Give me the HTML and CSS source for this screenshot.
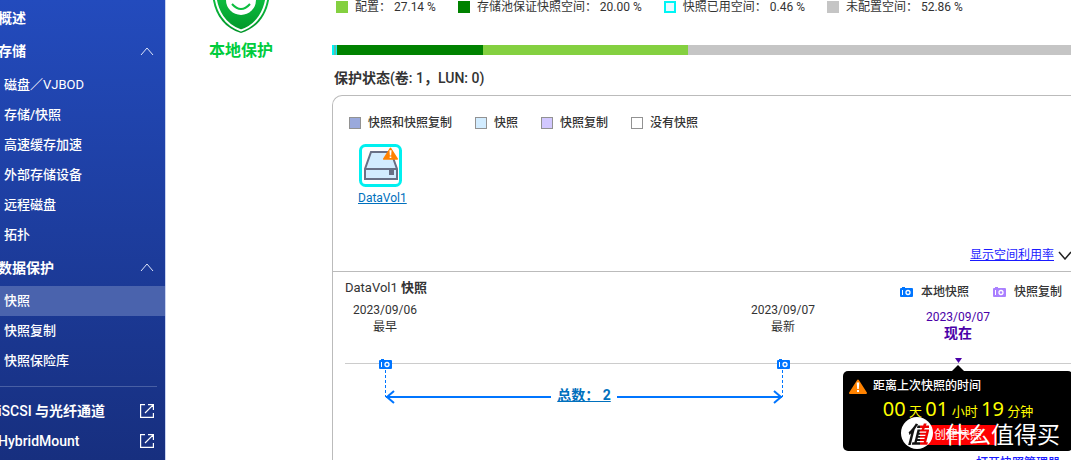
FILE: index.html
```html
<!DOCTYPE html>
<html lang="zh-CN">
<head>
<meta charset="utf-8">
<meta name="viewport" content="width=device-width, initial-scale=1">
<title>存储与快照总管</title>
<link rel="stylesheet" href="styles.css">
</head>
<body>
<svg class="defs" aria-hidden="true">
  <symbol id="camera" viewBox="0 0 13 10">
    <path fill="currentColor" d="M1 1h1V0h3v1h7q1 0 1 1v7q0 1-1 1H1q-1 0-1-1V2q0-1 1-1z"/>
    <path fill="#fff" d="M2 3h1v5H2z"/>
    <circle cx="8" cy="5.5" r="2" fill="none" stroke="#fff" stroke-width="1.3"/>
  </symbol>
  <symbol id="external" viewBox="0 0 14 14">
    <path fill="none" stroke="#fff" stroke-width="1.2" d="M5 .6H.6v12.800h12.800V9M8 .6h5.400V6M13.400 .6L5 9"/>
  </symbol>
  <symbol id="up" viewBox="0 0 14 9">
    <path fill="none" stroke="#dfe6fa" d="M1 8l6-7 6 7"/>
  </symbol>
  <symbol id="warning" viewBox="0 0 18 15">
    <path fill="#ff8200" stroke="#ff8200" stroke-width="2" stroke-linejoin="round" d="M9 1.500L17 14H1z"/>
    <path fill="#fff" d="M7.700 3.500h2.600L9.800 10H8.200zM8 11h2v2H8z"/>
  </symbol>
</svg>

<nav class="sidebar">
  <a class="group" href="#"><strong>概述</strong></a>
  <button class="group toggle" type="button"><strong>存储</strong><svg class="up"><use href="#up"/></svg></button>
  <a class="item" href="#">磁盘／<span class="latin">VJBOD</span></a>
  <a class="item" href="#">存储/快照</a>
  <a class="item" href="#">高速缓存加速</a>
  <a class="item" href="#">外部存储设备</a>
  <a class="item" href="#">远程磁盘</a>
  <a class="item" href="#">拓扑</a>
  <button class="group toggle" type="button"><strong>数据保护</strong><svg class="up"><use href="#up"/></svg></button>
  <a class="item active" href="#">快照</a>
  <a class="item" href="#">快照复制</a>
  <a class="item" href="#">快照保险库</a>
  <hr class="rule">
  <a class="group" href="#"><span>iSCSI <strong>与光纤通道</strong></span><svg class="external"><use href="#external"/></svg></a>
  <a class="group" href="#">HybridMount<svg class="external"><use href="#external"/></svg></a>
</nav>

<main class="main">
  <section class="protection">
    <svg class="shield" viewBox="0 0 58 33">
      <defs><linearGradient id="green" x1="0" y1="0" x2="0" y2="1"><stop offset="0" stop-color="#10c544"/><stop offset="1" stop-color="#009428"/></linearGradient></defs>
      <path fill="url(#green)" d="M0-8h58C57 12 47 28 29 33 11 28 1 12 0-8z"/>
      <path fill="none" stroke="#fff" stroke-width="2" d="M3-8C4 11 13 25 29 30.500 45 25 54 11 55-8"/>
      <circle cx="29" cy="0" r="15" fill="#fff"/>
      <path fill="none" stroke="#0cbd3f" stroke-width="2" d="M20 4q9 10 18 0"/>
    </svg>
    <strong class="protection-name">本地保护</strong>
  </section>

  <section class="content">
    <ul class="legend usage">
      <li><i class="swatch lime"></i>配置： 27.14 %</li>
      <li><i class="swatch dark"></i>存储池保证快照空间： 20.00 %</li>
      <li><i class="swatch cyan"></i>快照已用空间： 0.46 %</li>
      <li><i class="swatch gray"></i>未配置空间： 52.86 %</li>
    </ul>
    <div class="bar"><i class="seg used"></i><i class="seg dark"></i><i class="seg lime"></i><i class="seg gray"></i></div>
    <h2 class="heading"><strong>保护状态</strong>(<strong>卷</strong>: 1<strong>，</strong>LUN: 0)</h2>

    <div class="panel">
      <div class="volumes">
        <ul class="legend states">
          <li><i class="swatch box both"></i>快照和快照复制</li>
          <li><i class="swatch box snap"></i>快照</li>
          <li><i class="swatch box replica"></i>快照复制</li>
          <li><i class="swatch box"></i>没有快照</li>
        </ul>
        <a class="volume" href="#">
          <svg class="disk" viewBox="0 0 43 43">
            <rect x="1.500" y="1.500" width="40" height="40" rx="5" fill="#fff" stroke="#00f0f0" stroke-width="3"/>
            <path fill="#d2ecff" stroke="#687086" stroke-width="2" d="M12 8h20l6 17v10H6V25z"/>
            <path stroke="#687086" stroke-width="2" d="M6 25h32"/>
            <path fill="#687086" d="M30 26h5v5h-5z"/>
            <use href="#warning" x="24" y="3" width="15" height="13"/>
          </svg>
          <span>DataVol1</span>
        </a>
        <div class="utilization"><a class="link" href="#">显示空间利用率</a><svg class="down" viewBox="0 0 14 9"><path fill="none" stroke="#222" stroke-width="1.500" d="M1 1l6 7 6-7"/></svg></div>
      </div>

      <div class="history">
        <div class="history-head">
          <h3 class="history-title">DataVol1 <strong>快照</strong></h3>
          <ul class="legend sources">
            <li><svg class="camera"><use href="#camera"/></svg>本地快照</li>
            <li><svg class="camera remote"><use href="#camera"/></svg>快照复制</li>
          </ul>
        </div>
        <div class="timeline">
          <div class="date first">2023/09/06<br>最早</div>
          <div class="date latest">2023/09/07<br>最新</div>
          <div class="date now">2023/09/07<br><strong class="now-label">现在</strong></div>
          <i class="track"></i>
          <svg class="camera pin first"><use href="#camera"/></svg>
          <svg class="camera pin latest"><use href="#camera"/></svg>
          <div class="present">
            <svg class="mark" viewBox="0 0 7 5"><path fill="#4a00a8" d="M0 0h7L3.500 5z"/></svg>
            <div class="tooltip">
              <div class="tip-title"><svg class="warning"><use href="#warning"/></svg>距离上次快照的时间</div>
              <div class="elapsed"><span class="num">00</span> 天 <span class="num">01</span> 小时 <span class="num">19</span> 分钟</div>
              <button class="create" type="button">创建快照</button>
            </div>
          </div>
          <div class="range">
            <svg class="head" viewBox="0 0 10 14"><path fill="none" stroke="#0075ff" stroke-width="2" d="M9 1L2 7l7 6M1 7h9"/></svg>
            <i class="shaft"></i><a class="total" href="#">总数： 2</a><i class="shaft"></i>
            <svg class="head" viewBox="0 0 10 14"><path fill="none" stroke="#0075ff" stroke-width="2" d="M1 1l7 6-7 6M0 7h9"/></svg>
          </div>
        </div>
        <div class="manager"><a class="link" href="#">打开快照管理器</a></div>
      </div>
    </div>
  </section>
</main>

<div class="watermark"><span class="stamp"><span class="stamp-text">值</span></span><span>什么值得买</span></div>
</body>
</html>
```

FILE: styles.css
```css
* { box-sizing: border-box; }
body {
  display: flex;
  height: 100vh;
  margin: 0;
  overflow: hidden;
  position: relative;
  background: #fff;
  color: #333;
  font: 12px/16px Roboto, "Noto Sans CJK SC", sans-serif;
}
h2, h3, ul { margin: 0; padding: 0; list-style: none; }
svg { flex: none; display: block; }
.defs { position: absolute; width: 0; height: 0; }

.sidebar {
  display: flex;
  flex-direction: column;
  flex: none;
  width: 182px;
  margin-left: -16px;
  padding-top: 3px;
  border-right: 1px solid #c9d3f0;
  background: linear-gradient(#234bbd, #172f7f);
}
.group, .item {
  display: flex;
  flex: none;
  align-items: center;
  color: #fff;
  text-decoration: none;
}
.group {
  justify-content: space-between;
  height: 30px;
  padding: 0 11px 0 14px;
  border: 0;
  background: none;
  font: 500 14px/20px Roboto, "Noto Sans CJK SC", sans-serif;
}
.toggle { height: 36px; }
.toggle + .item { margin-top: 1px; }
.toggle:nth-of-type(2) { height: 35px; }
.item { height: 30px; padding-left: 20px; font-size: 13px; font-weight: 500; }
.latin { font-weight: 400; }
.active { background: #4a63ad; }
.up { width: 14px; height: 9px; }
.external { width: 14px; height: 14px; }
.rule { width: 157px; height: 1px; margin: 10px 8px 9px 16px; border: 0; background: #485fa4; flex: none; }

.main { display: flex; flex: 1; min-width: 0; gap: 16px; }
.protection { display: flex; flex-direction: column; align-items: center; width: 150px; flex: none; }
.shield { width: 58px; height: 33px; }
.protection-name { margin-top: 8px; color: #00cc3d; font-size: 16px; line-height: 20px; }
.content { display: flex; flex-direction: column; flex: 1; min-width: 0; }

.legend { display: flex; gap: 22px; white-space: nowrap; }
.legend li { display: flex; align-items: center; gap: 7px; }
.usage { height: 14px; padding-left: 4px; }
.states { gap: 23px; font-weight: 500; }
.swatch { width: 12px; height: 12px; }
.box { border: 1px solid #929292; }
.both { background: #9aa9dc; }
.snap { background: #d2ecff; }
.replica { background: #d2c8ff; }
.cyan { border: 2px solid #00f5f5; background: #eafaff; }
.dark { background: #008200; }
.lime { background: #84d040; }
.gray { background: #c5c5c5; }
.bar { display: flex; flex: none; height: 10px; margin-top: 31px; }
.used { flex: 2; border: solid #00f5f5; border-width: 0 1px 0 2px; background: #60b8b0; }
.seg.dark { flex: 146; }
.seg.lime { flex: 205; }
.seg.gray { flex: 383; }
.heading { margin: 13px 0 7px 2px; font-size: 14px; line-height: 20px; font-weight: 500; }

.panel {
  display: flex;
  flex-direction: column;
  flex: 1;
  border: solid #bbb;
  border-width: 1px 0 0 1px;
  border-top-left-radius: 10px;
}
.volumes { display: flex; flex-direction: column; align-items: flex-start; padding: 19px 0 8px 16px; border-bottom: 1px solid #bbb; }
.volume { display: flex; flex-direction: column; align-items: flex-start; gap: 3px; margin: 13px 0 0 9px; color: #0070bd; text-decoration: underline; }
.disk { width: 43px; height: 43px; margin-left: 1px; }
.utilization { display: flex; align-items: center; gap: 4px; align-self: flex-end; margin-top: 41px; margin-right: -1px; }
.link { color: #1a1aff; }
.down { width: 14px; height: 9px; }

.history { padding-left: 12px; }
.history-head { display: flex; justify-content: space-between; height: 30px; padding: 8px 9px 0 0; }
.history-title { font-size: 13px; font-weight: 400; }
.sources { align-self: flex-start; padding-top: 4px; gap: 24px; font-weight: 500; }
.sources li { gap: 8px; }
.camera { width: 13px; height: 10px; color: #0075ff; }
.remote { color: #aa80ff; }
.timeline {
  display: grid;
  grid-template-columns: 80px 318fr 80px 95fr 80px 73fr;
  grid-template-rows: 56px 12px 34px;
}
.date { grid-row: 1; text-align: center; line-height: 17px; }
.first { grid-column: 1; }
.latest { grid-column: 3; }
.now { grid-column: 5; padding-top: 7px; color: #4a00a8; line-height: 16px; }
.now-label { font-size: 14px; }
.track { grid-row: 2; grid-column: 1 / -1; height: 1px; margin-top: 5px; background: #ccc; }
.pin { grid-row: 2; justify-self: center; align-self: center; }
.present { position: relative; grid-row: 2; grid-column: 5; }
.mark { width: 7px; height: 5px; margin: 0 auto; }
.range {
  display: flex;
  align-items: flex-end;
  grid-row: 3;
  grid-column: 1 / 4;
  margin: 0 40px;
  background:
    repeating-linear-gradient(#0075ff 0 3px, transparent 3px 5px) left top / 1px 27px no-repeat,
    repeating-linear-gradient(#0075ff 0 3px, transparent 3px 5px) right top / 1px 27px no-repeat;
}
.head { width: 10px; height: 14px; }
.shaft { flex: 1; height: 2px; margin-bottom: 6px; background: #0075ff; }
.total { margin: 0 6px; padding-bottom: 1px; color: #0070bd; font-size: 14px; line-height: 16px; font-weight: 700; }
.manager { display: flex; justify-content: flex-end; padding: 51px 11px 0 0; font-weight: 500; }

.tooltip {
  position: absolute;
  top: 13px;
  left: 50%;
  width: 230px;
  height: 80px;
  padding: 7px 6px;
  transform: translateX(-50%);
  border-radius: 5px;
  background: #000;
  color: #fff;
  display: flex;
  flex-direction: column;
  align-items: center;
}
.tooltip::before {
  content: "";
  position: absolute;
  bottom: 100%;
  border: 6px solid transparent;
  border-top: 0;
  border-bottom-color: #000;
}
.tip-title { display: flex; align-items: center; align-self: stretch; gap: 6px; font-weight: 500; }
.warning { width: 18px; height: 15px; }
.elapsed { height: 30px; color: #ff0; font: 13px/30px "Noto Sans", "Noto Sans CJK SC", sans-serif; white-space: nowrap; }
.num { font-size: 20px; }
.create { width: 78px; height: 20px; margin-top: 1px; padding: 0; border: 0; flex: none; border-radius: 2px; background: #f00; color: #ffd6d6; font: 500 12px/16px Roboto, "Noto Sans CJK SC", sans-serif; }

.watermark {
  position: absolute;
  right: 11px;
  bottom: 11px;
  display: flex;
  align-items: center;
  gap: 12px;
  color: #fff;
  font: 23px/32px "Noto Sans CJK SC", sans-serif;
}
.stamp {
  width: 32px;
  height: 32px;
  border-radius: 50%;
  background: #fff;
  text-align: center;
}
.stamp-text {
  background: linear-gradient(90deg, #111 62%, #e00 62%);
  background-clip: text;
  color: transparent;
  font-style: italic;
  font-weight: 700;
}
```
